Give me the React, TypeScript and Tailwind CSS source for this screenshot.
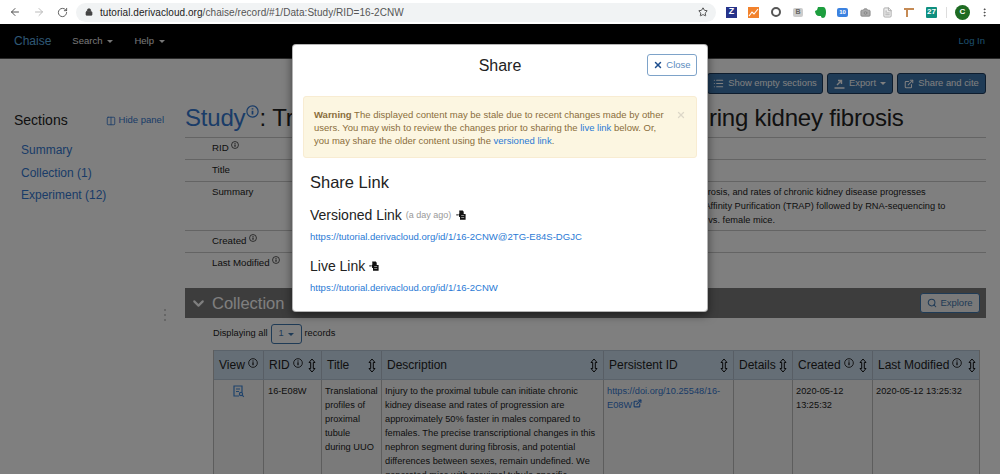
import { ChevronDown, Columns2, ExternalLink, List, Search, X, Star, ArrowLeft, ArrowRight, RotateCw, Lock, EllipsisVertical, FileText, Camera } from "lucide-react"
import type { ReactNode } from "react"

const font = "font-['Liberation_Sans',Arial,sans-serif]"

function Info({ size = 9 }: { size?: number }) {
  return (
    <svg width={size} height={size} viewBox="0 0 12 12" className="inline-block align-top" fill="none" stroke="currentColor">
      <circle cx="6" cy="6" r="5.2" strokeWidth="1.1" />
      <path d="M6 5.2v3.6M6 3v1.2" strokeWidth="1.6" />
    </svg>
  )
}

function SortArrow() {
  return (
    <svg width="8" height="15" viewBox="0 0 8 15" fill="none" stroke="#111" strokeWidth="1" className="shrink-0">
      <path d="M4 1 7 4.5H5.3v6H7l-3 3.5-3-3.5h1.7v-6H1z" />
    </svg>
  )
}

function Caret({ className = "" }: { className?: string }) {
  return <span className={`inline-block w-0 h-0 border-x-[3px] border-x-transparent border-t-[3px] border-t-current ${className}`} />
}

function CopyIcon() {
  return (
    <svg width="10" height="10" viewBox="0 0 10 10" className="inline-block" fill="#111">
      <path d="M3.2 0.4h3.6l.9 1.4v2.2h1.9v5.8H4V7H3.2L2.4 4.2l1-.6z" />
      <path d="M5.2 5.4h3v.6h-3zM5.2 7h3v.6h-3z" fill="#fff" />
      <path d="M0.4 4.2h1.4v1.2H0.4z" />
    </svg>
  )
}

function TopBar() {
  return (
    <div className="h-[24px] bg-white flex items-center">
      <div className="flex items-center w-[76px] pl-[9px] gap-[12px] shrink-0">
        <ArrowLeft size={12} className="text-[#555]" />
        <ArrowRight size={12} className="text-[#bbb]" />
        <RotateCw size={11} className="text-[#555]" />
      </div>
      <div className="h-[19px] w-[640px] rounded-full bg-[#f1f3f4] flex items-center pl-[9px] pr-[8px] text-[#555]">
        <Lock size={8} className="text-[#444] mr-[7px]" fill="#444" />
        <span className="text-[10px] tracking-[0.06px]"><span className="text-[#222]">tutorial.derivacloud.org</span>/chaise/record/#1/Data:Study/RID=16-2CNW</span>
        <Star size={10} className="ml-auto text-[#333]" />
      </div>
      <div className="flex items-center h-full">
        <div className="ml-[10px] w-[11px] h-[11px] bg-[#26338a] text-white text-[9px] font-bold flex items-center justify-center">Z</div>
        <div className="ml-[11px] w-[11px] h-[11px] bg-[#f2822c]">
          <svg viewBox="0 0 11 11" width="11" height="11" fill="none" stroke="#fff" strokeWidth="1.1"><path d="M1 9 4 5l2 2 4-5" /></svg>
        </div>
        <div className="ml-[12px] w-[10px] h-[10px] rounded-full border-[2.5px] border-[#555] bg-white" />
        <div className="ml-[12px] w-[10px] h-[9px] rounded-[2px] bg-[#ccc] text-[#666] text-[7px] font-bold flex items-center justify-center">B</div>
        <svg width="11" height="12" viewBox="0 0 11 12" className="ml-[12px]" fill="#1d9e3e">
          <path d="M3 1h5c2 0 3 2 3 5 0 3-1 6-3 6-1.500 0-2-1-2-2H4C2 10 0 8 0 5l2-1z" />
        </svg>
        <div className="ml-[11px] w-[11px] h-[9px] rounded-[2px] bg-[#3b82e0] text-white text-[6px] font-bold flex items-center justify-center">10</div>
        <Camera size={11} className="ml-[12px] text-[#888]" fill="#aaa" />
        <FileText size={11} className="ml-[11px] text-[#aaa]" fill="#eee" />
        <svg width="10" height="10" viewBox="0 0 10 10" className="ml-[11px]" fill="#c58a54"><path d="M0 1h10v2H4v7H2V3H0z" /></svg>
        <div className="ml-[12px] w-[11px] h-[11px] rounded-[1px] bg-[#0f8f7f] text-white text-[8px] font-bold flex items-center justify-center">27</div>
        <div className="ml-[9px] w-px h-[11px] bg-[#ddd]" />
        <div className="ml-[8px] w-[15px] h-[15px] rounded-full bg-[#1e6b22] text-white text-[8px] font-bold flex items-center justify-center">C</div>
        <EllipsisVertical size={11} className="ml-[9px] text-[#444]" />
      </div>
    </div>
  )
}

function NavBar() {
  return (
    <div className="h-[35px] bg-black flex items-center pl-[14px] pr-[15px] text-[9.5px] text-[#eee] border-b border-[#555]">
      <span className="text-[12px] text-[#5fb0e6]">Chaise</span>
      <span className="ml-[21px]">Search<Caret className="ml-[5px] align-middle" /></span>
      <span className="ml-[21px]">Help<Caret className="ml-[5px] align-middle" /></span>
      <span className="ml-auto text-[#3ca0dc]">Log In</span>
    </div>
  )
}

function ToolButton({ children, w }: { children: ReactNode; w: string }) {
  return (
    <button className={`${w} h-[21px] rounded-[3px] bg-[#3f76ad] border border-[#1c3a5c] text-white text-[9.4px] flex items-center justify-center gap-[4px] whitespace-nowrap`}>
      {children}
    </button>
  )
}

function RecordRow({ label, info, children, className = "h-[22px]" }: { label: string; info?: boolean; children?: ReactNode; className?: string }) {
  return (
    <div className={`flex border-b border-[#c8c8c8] text-[9.7px] leading-[14px] text-[#222] ${className}`}>
      <div className="w-[115px] pl-[27px] pt-[3px] shrink-0 whitespace-nowrap">
        {label} {info && <Info size={8} />}
      </div>
      <div className="pt-[3px] whitespace-nowrap text-[9.25px]">{children}</div>
    </div>
  )
}

const heads: { label: string; w: string; info?: boolean; sort?: boolean }[] = [
  { label: "View", w: "w-[50px]", info: true },
  { label: "RID", w: "w-[58px]", info: true, sort: true },
  { label: "Title", w: "w-[60px]", sort: true },
  { label: "Description", w: "w-[222px]", sort: true },
  { label: "Persistent ID", w: "w-[130px]", sort: true },
  { label: "Details", w: "w-[59px]", sort: true },
  { label: "Created", w: "w-[80px]", info: true, sort: true },
  { label: "Last Modified", w: "w-[108px]", info: true, sort: true },
]

function RecordsTable() {
  return (
    <div className="ml-[28px] mr-[6px] border-l border-r border-[#bbb] overflow-hidden text-[9.25px] leading-[14px] text-[#222]">
      <div className="flex h-[30px] bg-[#cbdcec] border-y border-[#b5c5d5]">
        {heads.map((h) => (
          <div key={h.label} className={`${h.w} shrink-0 border-r border-[#b0bdca] last:border-r-0 flex items-center px-[5px] text-[12px] text-[#222] whitespace-nowrap`}>
            <span>{h.label}</span>
            {h.info && <span className="ml-[3px] -mt-[5px] flex"><Info size={10} /></span>}
            {h.sort && <span className="ml-auto flex"><SortArrow /></span>}
          </div>
        ))}
      </div>
      <div className="flex h-[95px] bg-[#f5f5f5]">
        <div className="w-[50px] shrink-0 border-r border-[#bbb] flex justify-center pt-[5px]">
          <svg width="12" height="13" viewBox="0 0 12 13" fill="none" stroke="#3f86d6" strokeWidth="1.2">
            <path d="M9 7V1H1v10h5M3 4h4M3 6.500h3" />
            <circle cx="8" cy="9" r="1.6" />
            <path d="m9.2 10.2 1.600 1.600" />
          </svg>
        </div>
        <div className="w-[58px] shrink-0 border-r border-[#bbb] px-[4px] pt-[4px]">16-E08W</div>
        <div className="w-[60px] shrink-0 border-r border-[#bbb] px-[3px] pt-[4px]">Translational profiles of proximal tubule during UUO</div>
        <div className="w-[222px] shrink-0 border-r border-[#bbb] px-[3px] pt-[4px]">
          Injury to the proximal tubule can initiate chronic kidney disease and rates of progression are approximately 50% faster in males compared to females. The precise transcriptional changes in this nephron segment during fibrosis, and potential differences between sexes, remain undefined. We generated mice with proximal tubule-specific
        </div>
        <div className="w-[130px] shrink-0 border-r border-[#bbb] px-[3px] pt-[4px] text-[#3478d0] break-words">
          https://doi.org/10.25548/16-E08W<ExternalLink size={9} className="inline-block ml-[1px] align-baseline" strokeWidth={3} />
        </div>
        <div className="w-[59px] shrink-0 border-r border-[#bbb]" />
        <div className="w-[80px] shrink-0 border-r border-[#bbb] px-[3px] pt-[4px]">2020-05-12 13:25:32</div>
        <div className="w-[108px] shrink-0 px-[3px] pt-[4px]">2020-05-12 13:25:32</div>
      </div>
    </div>
  )
}

function Page() {
  return (
    <div className="flex bg-white">
      {/* left panel */}
      <div className="w-[185px] shrink-0 relative">
        <div className="flex items-center mt-[51px] pl-[14px] pr-[20px] justify-between">
          <span className="text-[14px] text-[#222]">Sections</span>
          <span className="flex items-center text-[9.5px] text-[#3478d0] gap-[3px] mr-[1px]">
            <Columns2 size={10} />
            Hide panel
          </span>
        </div>
        <ul className="mt-[8px] pl-[21px] text-[12px] leading-[22.500px] text-[#3478d0]">
          <li>Summary</li>
          <li>Collection (1)</li>
          <li>Experiment (12)</li>
        </ul>
        {/* resize handle */}
        <div className="absolute left-[164px] top-[250px] flex flex-col gap-[3px]">
          <span className="w-[2px] h-[2px] bg-[#ccc]" />
          <span className="w-[2px] h-[2px] bg-[#ccc]" />
          <span className="w-[2px] h-[2px] bg-[#ccc]" />
        </div>
      </div>
      {/* main column */}
      <div className="w-[801px] shrink-0">
        <div className="flex justify-end gap-[4px] mt-[14px]">
          <ToolButton w="w-[116px]"><List size={11} strokeWidth={2.5} />Show empty sections</ToolButton>
          <ToolButton w="w-[66px]">
            <svg width="11" height="11" viewBox="0 0 11 11" fill="none" stroke="currentColor" strokeWidth="1.400"><path d="M0.500 10h10M3 7l4-4M4 2.500h3.500V6" /></svg>
            Export <Caret />
          </ToolButton>
          <ToolButton w="w-[89px]"><ExternalLink size={10} strokeWidth={2.5} />Share and cite</ToolButton>
        </div>
        <h1 className="h-[44px] pt-[4px] text-[24px] tracking-[-0.2px] leading-[40px] text-[#222] whitespace-nowrap border-b border-[#c8c8c8]">
          <span className="text-[#3478d0]">Study<span className="inline-block align-top mt-[7px] ml-[1px]"><Info size={13} /></span></span>: <span className="tracking-[-0.37px]">Translational profiles of the renal tubule</span> during kidney fibrosis
        </h1>
        <RecordRow label="RID" info />
        <RecordRow label="Title" />
        <RecordRow label="Summary" className="h-[49px]">
          <div>Injury to the proximal tubule can initiate chronic kidney disease during the development of kidney fibrosis, and rates of chronic kidney disease progresses</div>
          <div>We generated mice with proximal tubule-specific expressing EGFP-L10a for Translating Ribosome Affinity Purification (TRAP) followed by RNA-sequencing to</div>
          <div>profile transcriptional changes in the proximal tubule during fibrosis progression or recovery in male vs. female mice.</div>
        </RecordRow>
        <RecordRow label="Created" info />
        <div className="flex text-[9.7px] leading-[14px] text-[#222] h-[35px]">
          <div className="w-[115px] pl-[27px] pt-[3px] whitespace-nowrap">Last Modified <Info size={8} /></div>
        </div>
        <div className="h-[30px] bg-[#7a7a7a] flex items-center pl-[5px] pr-[6px] text-white">
          <ChevronDown size={17} strokeWidth={3} />
          <span className="ml-[5px] text-[16.500px]">Collection</span>
          <button className="ml-auto h-[20px] w-[60px] rounded-[3px] bg-white/90 border border-[#3f76ad] text-[#3f76ad] text-[9.5px] flex items-center justify-center gap-[3px]">
            <Search size={10} strokeWidth={2.5} />Explore
          </button>
        </div>
        <div className="flex items-center pl-[28px] h-[32px] text-[9.25px] text-[#222]">
          Displaying all
          <span className="mx-[3px] w-[31px] h-[20px] rounded-[3px] border border-[#3f76ad] flex items-center justify-center gap-[4px] text-[#3f76ad]">1 <Caret /></span>
          records
        </div>
        <RecordsTable />
      </div>
    </div>
  )
}

export default function App() {
  return (
    <div className={`relative w-[1000px] h-[474px] overflow-hidden bg-white ${font}`}>
      <TopBar />
      <NavBar />
      <Page />
      {/* dimmed backdrop */}
      <div className="absolute left-0 right-0 top-[24px] bottom-0 bg-black/50" />
      {/* share dialog */}
      <div className="absolute left-[292px] top-[44px] w-[416px] h-[268px] bg-white rounded-[4px] shadow-[0_3px_10px_rgba(0,0,0,0.5)] border border-[#444]/40">
        <div className="relative h-[51px] text-center text-[16px] leading-[42px] text-[#222]">
          Share
          <button className="absolute right-[10px] top-[9px] w-[50px] h-[22px] rounded-[3px] border border-[#7ea3c9] text-[#5a8abd] text-[9.500px] flex items-center justify-center gap-[3px]">
            <X size={10} strokeWidth={3.5} className="text-[#1f4f8f]" />Close
          </button>
        </div>
        <div className="mx-[10px] h-[62px] rounded-[3px] bg-[#fcf6e1] border border-[#f8ecd2] pl-[10px] pr-[28px] pt-[11px] text-[9.5px] leading-[13px] text-[#8a6d3b] relative">
          <strong>Warning</strong> The displayed content may be stale due to recent changes made by other users. You may wish to review the changes prior to sharing the <span className="text-[#2a7ad5]">live link</span> below. Or, you may share the older content using the <span className="text-[#2a7ad5]">versioned link</span>.
          <X size={10} strokeWidth={3} className="absolute right-[10px] top-[13px] text-[#ddd8c8]" />
        </div>
        <div className="px-[17px] text-[#222]">
          <div className="mt-[14px] text-[16.500px] leading-[20px]">Share Link</div>
          <div className="mt-[13px] text-[14px] leading-[18px] flex items-center">
            Versioned Link <span className="ml-[4px] text-[9px] text-[#999] mt-[1px]">(a day ago)</span><span className="ml-[5px] flex"><CopyIcon /></span>
          </div>
          <div className="mt-[6px] text-[9.550px] leading-[14px] text-[#2a7ad5]">https://tutorial.derivacloud.org/id/1/16-2CNW@2TG-E84S-DGJC</div>
          <div className="mt-[13px] text-[14px] leading-[18px] flex items-center">
            Live Link <span className="ml-[4px] flex"><CopyIcon /></span>
          </div>
          <div className="mt-[6px] text-[9.550px] leading-[14px] text-[#2a7ad5]">https://tutorial.derivacloud.org/id/1/16-2CNW</div>
        </div>
      </div>
    </div>
  )
}
